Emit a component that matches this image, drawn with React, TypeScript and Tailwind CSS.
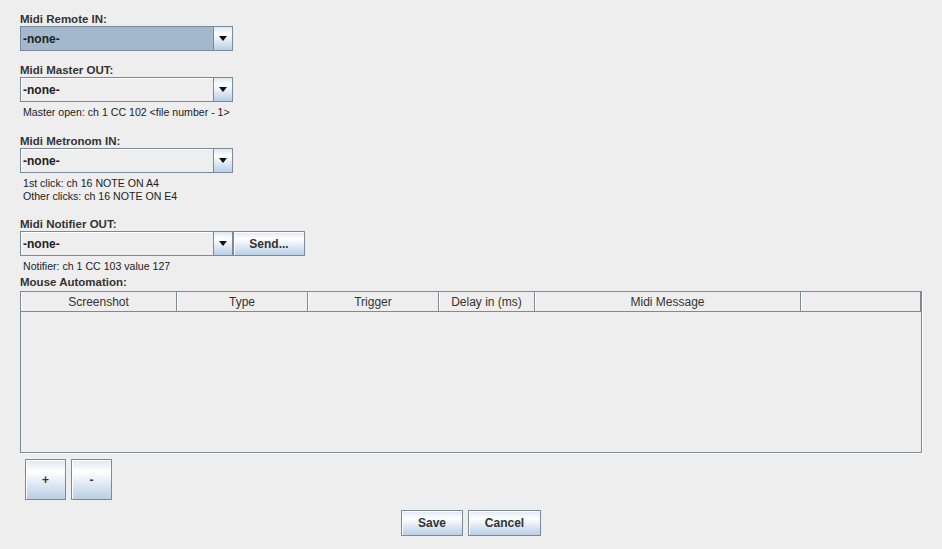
import React from "react";

const FONT = { fontFamily: '"Liberation Sans", Arial, sans-serif' };

const BTN =
  "border border-[#7a8a99] bg-[linear-gradient(to_bottom,#dde8f3_0%,#ffffff_30%,#b8cfe5_100%)] shadow-[inset_1px_1px_0_#ffffff] text-[#333333] font-bold text-[12px] flex items-center justify-center";

function Label({ text }: { text: string }) {
  return (
    <div className="h-[13px] leading-[13px] text-[11.5px] font-bold text-[#333333] whitespace-nowrap">
      {text}
    </div>
  );
}

function Note({ text }: { text: string }) {
  return (
    <div className="h-[13px] leading-[13px] text-[10.6px] text-[#222222] pl-[3px] whitespace-nowrap">
      {text}
    </div>
  );
}

function Combo({ selected = false }: { selected?: boolean }) {
  return (
    <div className="flex h-[25px] w-[213px] border border-[#7a8a99]">
      <div
        className={`flex flex-1 items-center pl-[2px] text-[12px] font-bold text-[#222222] ${
          selected ? "bg-[#a3b8cc]" : "bg-[#eeeeee] shadow-[inset_1px_1px_0_#ffffff]"
        }`}
      >
        -none-
      </div>
      <div className="flex w-[19px] items-center justify-center border-l border-[#7a8a99] bg-[linear-gradient(to_bottom,#dde8f3_0%,#ffffff_30%,#b8cfe5_100%)]">
        <div className="h-0 w-0 border-l-[4px] border-r-[4px] border-t-[5px] border-l-transparent border-r-transparent border-t-[#111111]" />
      </div>
    </div>
  );
}

const COLUMNS: { name: string; w: string }[] = [
  { name: "Screenshot", w: "w-[156px]" },
  { name: "Type", w: "w-[131px]" },
  { name: "Trigger", w: "w-[131px]" },
  { name: "Delay in (ms)", w: "w-[96px]" },
  { name: "Midi Message", w: "w-[266px]" },
  { name: "", w: "w-[120px]" },
];

export default function App() {
  return (
    <div
      className="flex h-[549px] w-[942px] flex-col bg-[#eeeeee] pl-[20px] pt-[13px]"
      style={FONT}
    >
      <Label text="Midi Remote IN:" />
      <Combo selected />

      <div className="mt-[13px]">
        <Label text="Midi Master OUT:" />
      </div>
      <Combo />
      <div className="mt-[4px]">
        <Note text="Master open: ch 1 CC 102 <file number - 1>" />
      </div>

      <div className="mt-[16px]">
        <Label text="Midi Metronom IN:" />
      </div>
      <Combo />
      <div className="mt-[4px]">
        <Note text="1st click: ch 16 NOTE ON A4" />
        <Note text="Other clicks: ch 16 NOTE ON E4" />
      </div>

      <div className="mt-[15px]">
        <Label text="Midi Notifier OUT:" />
      </div>
      <div className="flex">
        <Combo />
        <button className={`${BTN} h-[25px] w-[72px]`}>Send...</button>
      </div>
      <div className="mt-[4px]">
        <Note text="Notifier: ch 1 CC 103 value 127" />
      </div>

      <div className="mt-[3px]">
        <Label text="Mouse Automation:" />
      </div>
      <div className="mt-[2px] h-[162px] w-[902px] border border-[#7a8a99] shadow-[1px_1px_0_#ffffff]">
        <div className="flex h-[20px] border-b border-[#7a8a99]">
          {COLUMNS.map((c, i) => (
            <div
              key={i}
              className={`${c.w} flex items-center justify-center border-r border-[#7a8a99] text-[12px] text-[#333333] shadow-[inset_1px_0_0_#ffffff]`}
            >
              {c.name}
            </div>
          ))}
        </div>
      </div>

      <div className="ml-[5px] mt-[6px] flex gap-[5px]">
        <button className={`${BTN} h-[41px] w-[41px] text-[11px]`}>+</button>
        <button className={`${BTN} h-[41px] w-[41px] text-[11px]`}>-</button>
      </div>

      <div className="mt-[10px] flex justify-center gap-[5px] pr-[20px]">
        <button className={`${BTN} h-[26px] w-[62px]`}>Save</button>
        <button className={`${BTN} h-[26px] w-[73px]`}>Cancel</button>
      </div>
    </div>
  );
}
